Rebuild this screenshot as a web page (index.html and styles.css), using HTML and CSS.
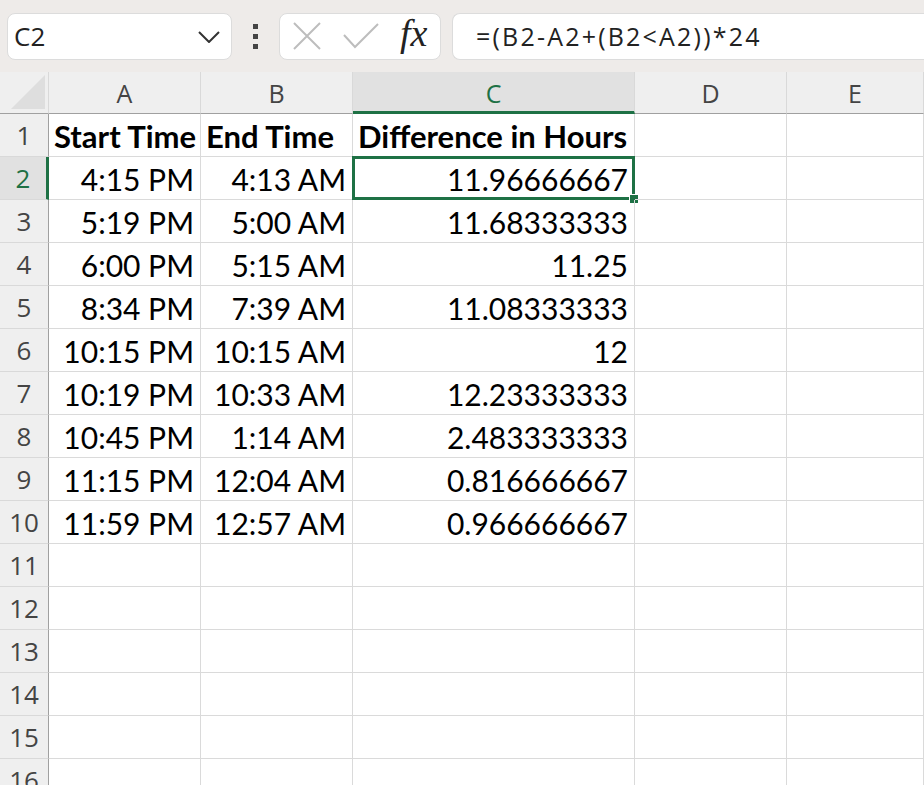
FILE: index.html
```html
<!DOCTYPE html>
<html lang="en">
<head>
    <meta charset="UTF-8">
    <title>Time difference</title>
    <link rel="stylesheet" href="styles.css">
</head>
<body>

<div class="toolbar">
    <div class="name-box">
        <span>C2</span>
        <svg class="chevron" width="22" height="12" viewBox="0 0 22 12"><path d="M1 1 L11 11 L21 1" fill="none" stroke="#333" stroke-width="2"/></svg>
    </div>
    <div class="grip"><i></i><i></i><i></i></div>
    <div class="func-box">
        <svg width="28" height="28" viewBox="0 0 28 28"><path d="M1 1 L27 27 M27 1 L1 27" stroke="#bdbdbd" stroke-width="2"/></svg>
        <svg width="36" height="26" viewBox="0 0 36 26"><path d="M1 12 L12 24 L35 1" fill="none" stroke="#bdbdbd" stroke-width="2"/></svg>
        <span class="fx">fx</span>
    </div>
    <div class="formula">=(B2-A2+(B2&lt;A2))*24</div>
</div>

<div class="sheet">
    <div class="corner"><span></span></div>
    <div class="col-head">A</div>
    <div class="col-head">B</div>
    <div class="col-head active">C</div>
    <div class="col-head">D</div>
    <div class="col-head">E</div>
</div>

<div class="sheet" id="rows"></div>

<script>
    // spreadsheet data, one row per line
    const data = [
        ['Start Time', 'End Time', 'Difference in Hours'],
        ['4:15 PM', '4:13 AM', '11.96666667'],
        ['5:19 PM', '5:00 AM', '11.68333333'],
        ['6:00 PM', '5:15 AM', '11.25'],
        ['8:34 PM', '7:39 AM', '11.08333333'],
        ['10:15 PM', '10:15 AM', '12'],
        ['10:19 PM', '10:33 AM', '12.23333333'],
        ['10:45 PM', '1:14 AM', '2.483333333'],
        ['11:15 PM', '12:04 AM', '0.816666667'],
        ['11:59 PM', '12:57 AM', '0.966666667']
    ];

    const rows = document.getElementById('rows');
    for (let r = 1; r <= 16; r++) {
        const vals = data[r - 1] || [];
        const head = document.createElement('div');
        head.className = 'row-head' + (r === 2 ? ' active' : '');
        head.textContent = r;
        rows.appendChild(head);
        for (let c = 0; c < 5; c++) {
            const cell = document.createElement('div');
            cell.className = 'cell' + (r === 1 ? ' bold' : '');
            if (r === 2 && c === 2) {
                cell.classList.add('selected');
                const handle = document.createElement('span');
                handle.className = 'handle';
                cell.appendChild(handle);
            }
            if (vals[c]) {
                cell.appendChild(document.createTextNode(vals[c]));
            }
            rows.appendChild(cell);
        }
    }
</script>

</body>
</html>
```

FILE: styles.css
```css
body {
    margin: 0;
    background: #ffffff;
    font-family: 'Lato', 'Liberation Sans', sans-serif;
    color: #000;
    overflow: hidden;
    width: 924px;
    height: 785px;
}

.toolbar {
    height: 72px;
    background: #eeebe9;
    display: flex;
    align-items: center;
    padding-left: 7px;
    box-sizing: border-box;
}

.name-box {
    width: 225px;
    height: 47px;
    box-sizing: border-box;
    background: #fff;
    border: 1px solid #dcdcdc;
    border-radius: 8px;
    display: flex;
    align-items: center;
    justify-content: space-between;
    padding: 0 11px 0 6px;
    font-family: 'Open Sans', sans-serif;
    font-size: 26px;
    color: #222;
}

.chevron {
    margin-top: 2px;
}

.grip {
    width: 47px;
    display: flex;
    flex-direction: column;
    align-items: center;
    gap: 5px;
}

.grip i {
    width: 5px;
    height: 5px;
    background: #444;
}

.func-box {
    width: 162px;
    height: 47px;
    box-sizing: border-box;
    background: #fff;
    border: 1px solid #dcdcdc;
    border-radius: 8px;
    display: flex;
    align-items: center;
    padding: 0 11px 0 13px;
    gap: 22px;
}

.fx {
    font-family: 'Liberation Serif', serif;
    font-style: italic;
    font-size: 38px;
    color: #222;
    margin-left: -1px;
    margin-top: -6px;
}

.formula {
    margin-left: 11px;
    flex: 1;
    height: 47px;
    box-sizing: border-box;
    background: #fff;
    border: 1px solid #dcdcdc;
    border-right: none;
    border-radius: 8px 0 0 8px;
    display: flex;
    align-items: center;
    padding-left: 23px;
    font-family: 'Open Sans', sans-serif;
    font-size: 25px;
    letter-spacing: 2.2px;
    color: #222;
}

.sheet {
    display: grid;
    grid-template-columns: 49px 152px 152px 282px 152px 1fr;
}

#rows {
    grid-auto-rows: 43px;
}

.corner {
    height: 42px;
    background: #efefef;
    border-right: 1px solid #d9d9d9;
    border-bottom: 1px solid #a0a0a0;
    box-sizing: border-box;
    display: flex;
    align-items: flex-end;
    justify-content: flex-end;
    padding: 0 3px 4px 0;
}

.corner span {
    width: 0;
    height: 0;
    border-left: 34px solid transparent;
    border-bottom: 34px solid #dedede;
}

.col-head {
    height: 42px;
    background: #efefef;
    border-right: 1px solid #d9d9d9;
    border-bottom: 1px solid #a0a0a0;
    box-sizing: border-box;
    display: flex;
    align-items: center;
    justify-content: center;
    font-family: 'Open Sans', sans-serif;
    font-size: 25px;
    color: #444;
}

.col-head.active {
    background: #e1e1e1;
    color: #1e7145;
    border-bottom: 3px solid #1e7145;
    padding-top: 2px;
}

.row-head {
    background: #efefef;
    border-right: 1px solid #a0a0a0;
    border-bottom: 1px solid #d9d9d9;
    box-sizing: border-box;
    display: flex;
    align-items: center;
    justify-content: center;
    font-family: 'Open Sans', sans-serif;
    font-size: 26px;
    color: #444;
}

.row-head.active {
    background: #e1e1e1;
    color: #1e7145;
    border-right: 3px solid #1e7145;
}

.cell {
    position: relative;
    border-right: 1px solid #dadada;
    border-bottom: 1px solid #dadada;
    box-sizing: border-box;
    display: flex;
    align-items: center;
    justify-content: flex-end;
    padding: 2px 6px 0 4px;
    font-size: 30px;
    white-space: nowrap;
}

.cell.bold {
    justify-content: flex-start;
    font-weight: bold;
    font-size: 31px;
    padding-left: 5px;
}

.cell.selected {
    border: 3px solid #1e7145;
    margin: -1px 0 0 -1px;
    padding-right: 4px;
}

.handle {
    position: absolute;
    right: -7px;
    bottom: -7px;
    width: 8px;
    height: 8px;
    background: #1e7145;
    border: 1px solid #fff;
}
```
